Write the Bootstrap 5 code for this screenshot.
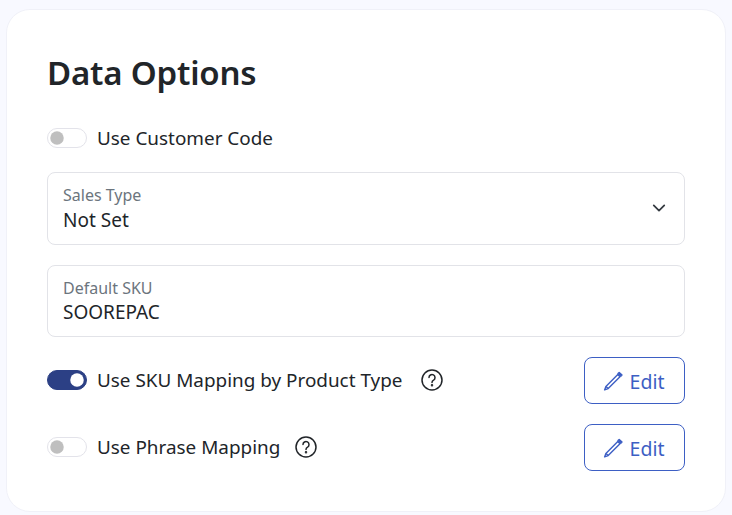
<!DOCTYPE html>
<html lang="en">
<head>
<meta charset="utf-8">
<title>Data Options</title>
<link href="https://cdn.jsdelivr.net/npm/bootstrap@5.3.0/dist/css/bootstrap.min.css" rel="stylesheet">
<style>
html, body { height: 100%; }
body { background: #f8f9ff; font-family: "Noto Sans", "Open Sans", sans-serif; color: #212529; overflow: hidden; }
.shell { padding: 9px 6px 3px 6px; height: 515px; }
.panel { background: #fff; border: 1px solid #f0f1f8; border-radius: 24px; height: 503px; padding: 39px 40px 0 40px; }
.panel-title { font-size: 33px; font-weight: 600; line-height: 48px; margin: 0 0 29px; letter-spacing: -.2px; }
.sw.form-check { min-height: 20px; padding-left: 0; margin: 0; display: flex; align-items: center; gap: 10px; }
.opt-row .sw.form-check { margin-bottom: 2px; }
.sw .form-check-input { width: 40px; height: 20px; margin: 0; float: none; flex: none; border-color: #e3e3ea; }
.sw .form-check-input:checked { background-color: #2c4085; border-color: #2c4085; }
.sw .form-check-label { font-size: 18.9px; line-height: 24px; }
.fld { margin-top: 20px; }
.fld .form-control, .fld .form-select { height: 100%; min-height: 0; border-color: #e2e3e8; border-radius: 8px; font-size: 19px; line-height: 24px; color: #212529; background-color: #fff; }
.fld-sel { height: 73px; margin-top: 22px; }
.fld-inp { height: 72px; }
.fld .form-select { padding: 32px 15px 10px; background-position: right 16px top 28px; background-size: 18px 14px; }
.fld .form-control:not(:placeholder-shown) { padding: 32px 15px 10px; }
.fld label { font-size: 16px; color: #6c757d; padding: 0; left: 16px; top: 12px; height: auto; transform: none !important; opacity: 1 !important; line-height: 22px; border: 0; }
.fld label::after { display: none; }
.opt-row { height: 47px; margin-top: 20px; }
.hint-wide { flex: none; display: block; margin-left: 9px; }
.hint-tight { flex: none; display: block; margin-left: 5px; }
.edit-btn { width: 101px; height: 47px; border-radius: 8px; border-color: #3d5fc4; color: #3d5fc4; font-size: 19.5px; padding: 2px 2px 0 0; background: #fff; gap: 7px; }
.edit-btn svg { margin-top: -2px; }
</style>
</head>
<body>
<div class="shell">
  <div class="panel">
    <h1 class="panel-title">Data Options</h1>
    <div class="form-check form-switch sw">
      <input class="form-check-input" type="checkbox" role="switch" id="s1">
      <label class="form-check-label" for="s1">Use Customer Code</label>
    </div>
    <div class="form-floating fld fld-sel">
      <select class="form-select" id="f1"><option>Not Set</option></select>
      <label for="f1">Sales Type</label>
    </div>
    <div class="form-floating fld fld-inp">
      <input class="form-control" id="f2" value="SOOREPAC">
      <label for="f2">Default SKU</label>
    </div>
    <div class="opt-row d-flex align-items-center justify-content-between">
      <div class="form-check form-switch sw">
        <input class="form-check-input" type="checkbox" role="switch" id="s2" checked>
        <label class="form-check-label" for="s2">Use SKU Mapping by Product Type</label>
        <svg class="hint-wide" width="22" height="22" viewBox="0 0 22 22" fill="none" stroke="#212529" stroke-width="1.5" stroke-linecap="round"><circle cx="11" cy="11" r="10"/><path d="M8 8.6a3 3 0 1 1 4.6 2.5c-1 .6-1.6 1.2-1.6 2.3"/><circle cx="11" cy="16.2" r=".5"/></svg>
      </div>
      <button type="button" class="btn btn-outline-primary edit-btn d-inline-flex align-items-center justify-content-center">
        <svg width="20" height="20" viewBox="0 0 20 20" fill="none" stroke="currentColor" stroke-width="1.4" stroke-linejoin="round"><path d="M14.8 3.6 17 5.8 5.2 17.6 1.6 18.9 2.9 15.4Z"/><path d="M2.9 15.4 5.2 17.6"/><path d="M16.2 1.4 19 4.1 17.8 5.2 15 2.6Z" fill="currentColor"/></svg>
        <span>Edit</span>
      </button>
    </div>
    <div class="opt-row d-flex align-items-center justify-content-between">
      <div class="form-check form-switch sw">
        <input class="form-check-input" type="checkbox" role="switch" id="s3">
        <label class="form-check-label" for="s3">Use Phrase Mapping</label>
        <svg class="hint-tight" width="22" height="22" viewBox="0 0 22 22" fill="none" stroke="#212529" stroke-width="1.5" stroke-linecap="round"><circle cx="11" cy="11" r="10"/><path d="M8 8.6a3 3 0 1 1 4.6 2.5c-1 .6-1.6 1.2-1.6 2.3"/><circle cx="11" cy="16.2" r=".5"/></svg>
      </div>
      <button type="button" class="btn btn-outline-primary edit-btn d-inline-flex align-items-center justify-content-center">
        <svg width="20" height="20" viewBox="0 0 20 20" fill="none" stroke="currentColor" stroke-width="1.4" stroke-linejoin="round"><path d="M14.8 3.6 17 5.8 5.2 17.6 1.6 18.9 2.9 15.4Z"/><path d="M2.9 15.4 5.2 17.6"/><path d="M16.2 1.4 19 4.1 17.8 5.2 15 2.6Z" fill="currentColor"/></svg>
        <span>Edit</span>
      </button>
    </div>
  </div>
</div>
<script src="https://cdn.jsdelivr.net/npm/bootstrap@5.3.0/dist/js/bootstrap.bundle.min.js"></script>
</body>
</html>
